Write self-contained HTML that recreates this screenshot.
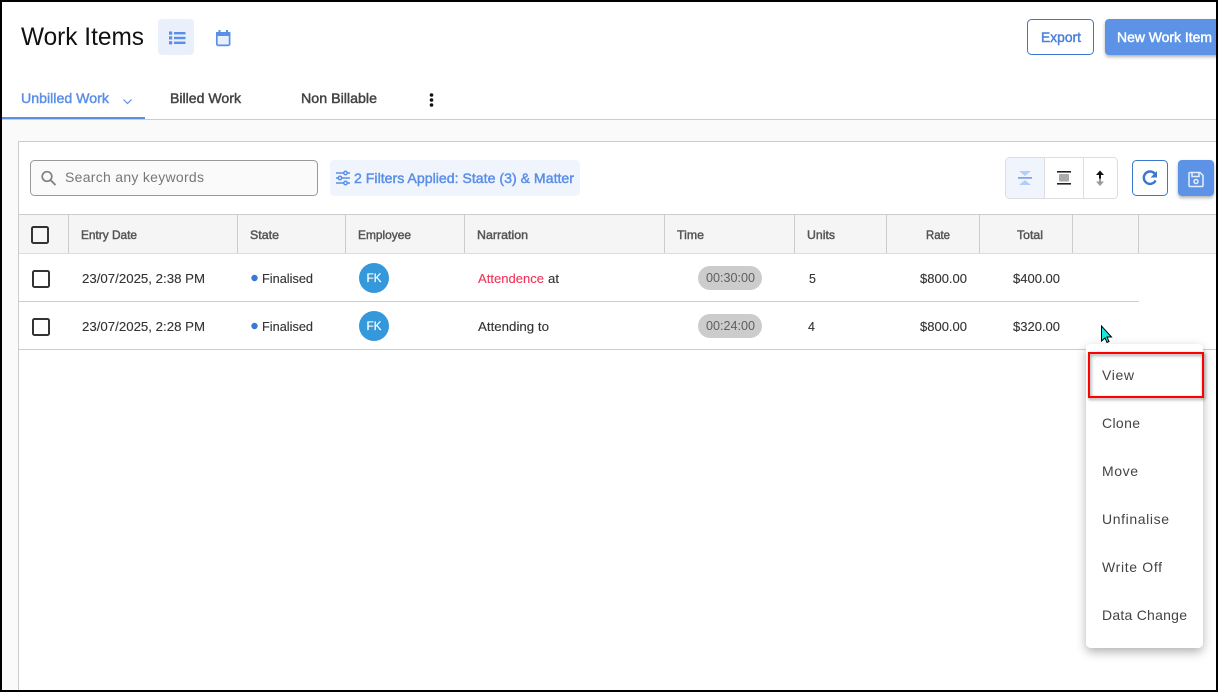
<!DOCTYPE html>
<html><head><meta charset="utf-8"><title>Work Items</title>
<style>
html,body{margin:0;padding:0;background:#fff;width:1218px;height:692px;overflow:hidden}
svg{display:block;position:absolute;left:0;top:0}
text{font-family:"Liberation Sans",sans-serif;font-size:12.5px;fill:#333}
.m{stroke-width:.45px}
.h{font-size:12px;fill:#555;stroke:#555;stroke-width:.45px}
.t{font-size:12.5px;fill:#333;stroke:#333;stroke-width:.12px}
.i{font-size:14px;fill:#444}
</style></head><body>
<svg width="1218" height="692" viewBox="0 0 1218 692" xmlns="http://www.w3.org/2000/svg">
<defs>
<filter id="s1" x="-30%" y="-10%" width="160%" height="125%"><feDropShadow dx="0" dy="4" stdDeviation="5" flood-color="#000" flood-opacity=".3"/></filter>
<filter id="s2" x="-20%" y="-20%" width="140%" height="150%"><feDropShadow dx="0" dy="2" stdDeviation="1.5" flood-color="#000" flood-opacity=".3"/></filter>
<filter id="s3" x="-10%" y="-10%" width="120%" height="130%"><feDropShadow dx="1" dy="1.500" stdDeviation="1.500" flood-color="#000" flood-opacity=".45"/></filter>
</defs>
<rect width="1218" height="692" fill="#fff"/>
<!-- page background -->
<rect x="2" y="120" width="1214" height="570" fill="#fafafa"/>
<rect x="2" y="119" width="1214" height="1" fill="#ccc"/>
<rect x="2" y="117" width="143" height="2" fill="#5b8fe6"/>
<!-- panel -->
<rect x="18.500" y="141.500" width="1210" height="560" fill="#fff" stroke="#ccc"/>

<!-- title -->
<text x="21" y="45" textLength="123" lengthAdjust="spacingAndGlyphs" style="font-size:25px;fill:#111">Work Items</text>
<rect x="158" y="19" width="36" height="36" rx="4" fill="#e9effb"/>
<g fill="#5b8fe6"><rect x="169" y="31.500" width="3.200" height="3.200"/><rect x="169" y="36.300" width="3.200" height="3.200"/><rect x="169" y="41.200" width="3.200" height="3.200"/><rect x="174" y="32" width="11.500" height="2.400"/><rect x="174" y="36.800" width="11.500" height="2.400"/><rect x="174" y="41.600" width="11.500" height="2.400"/></g>
<rect x="216.800" y="33" width="12.800" height="12.400" rx="1.500" fill="#e6effc" stroke="#5b8fe6" stroke-width="1.700"/>
<rect x="216" y="32" width="14.400" height="4" fill="#5b8fe6"/>
<rect x="218.500" y="30" width="2" height="3" fill="#5b8fe6"/><rect x="226" y="30" width="2" height="3" fill="#5b8fe6"/>

<!-- tabs -->
<text x="21" y="103" textLength="88" lengthAdjust="spacingAndGlyphs" class="m" style="font-size:14px;fill:#5b8fe6;stroke:#5b8fe6">Unbilled Work</text>
<path d="M123.500 99.500l4 4 4-4" fill="none" stroke="#5b8fe6" stroke-width="1.200"/>
<text x="170" y="103" textLength="71" lengthAdjust="spacingAndGlyphs" class="m" style="font-size:14px;fill:#444;stroke:#444">Billed Work</text>
<text x="301" y="103" textLength="76" lengthAdjust="spacingAndGlyphs" class="m" style="font-size:14px;fill:#444;stroke:#444">Non Billable</text>
<circle cx="431.500" cy="95" r="1.800" fill="#111"/><circle cx="431.500" cy="100" r="1.800" fill="#111"/><circle cx="431.500" cy="105" r="1.800" fill="#111"/>

<!-- top buttons -->
<rect x="1027.500" y="19.500" width="66" height="35" rx="4" fill="#fff" stroke="#3a78d0"/>
<text x="1041" y="42" textLength="40" lengthAdjust="spacingAndGlyphs" class="m" style="font-size:14px;fill:#4a80d8;stroke:#4a80d8">Export</text>
<rect x="1105" y="19" width="120" height="36" rx="4" fill="#5b93e6" filter="url(#s2)"/>
<text x="1117" y="42" textLength="95" lengthAdjust="spacingAndGlyphs" class="m" style="font-size:14px;fill:#fff;stroke:#fff">New Work Item</text>

<!-- search -->
<rect x="30.500" y="160.500" width="287" height="35" rx="4" fill="#fafafa" stroke="#999"/>
<circle cx="47" cy="176.500" r="4.800" fill="none" stroke="#808080" stroke-width="1.700"/>
<path d="M50.500 180l5 5" stroke="#808080" stroke-width="1.900" fill="none"/>
<text x="65" y="182" textLength="139" lengthAdjust="spacing" style="font-size:14px;fill:#777">Search any keywords</text>

<!-- filter chip -->
<rect x="330" y="160" width="250" height="36" rx="4" fill="#f0f5fd"/>
<g stroke="#5b8fe6" stroke-width="1.500" fill="#f0f5fd"><path d="M336 173h14M336 178h14M336 183h14"/><circle cx="345.500" cy="173" r="1.700"/><circle cx="340" cy="178" r="1.700"/><circle cx="345.500" cy="183" r="1.700"/></g>
<text x="354" y="183" textLength="220" lengthAdjust="spacingAndGlyphs" class="m" style="font-size:14px;fill:#5b8fe6;stroke:#5b8fe6">2 Filters Applied: State (3) &amp; Matter</text>

<!-- toggle group -->
<rect x="1005.500" y="157.500" width="112" height="41" rx="4" fill="#fff" stroke="#ddd"/>
<path d="M1006 161.500a3.500 3.500 0 0 1 3.500-3.500H1044v40h-34.500a3.500 3.500 0 0 1-3.500-3.500z" fill="#f0f5fd"/>
<rect x="1044" y="158" width="1" height="40" fill="#ddd"/><rect x="1083" y="158" width="1" height="40" fill="#ddd"/>
<rect x="1018" y="177" width="14" height="1.800" fill="#7fa8ea"/>
<path d="M1019 171h12l-6 5zM1019 185h12l-6-5z" fill="#b4cdf5"/>
<rect x="1057" y="171" width="14" height="1.600" fill="#222"/><rect x="1057" y="183" width="14" height="1.600" fill="#222"/><rect x="1059" y="174" width="10" height="7.500" rx="1" fill="#aaa"/>
<path d="M1100 170.500l-4 4.500h3v3.500h2V175h3z" fill="#111"/>
<path d="M1100 186l-4-4.500h3v-3h2v3h3z" fill="#999"/>

<rect x="1132.500" y="160.500" width="35" height="35" rx="4" fill="#fff" stroke="#3a78d0"/>
<path d="M1155 174a6.200 6.200 0 1 0 .6 6.400" fill="none" stroke="#3a78d0" stroke-width="2.400"/>
<path d="M1157 171v6.500h-6.500z" fill="#3a78d0"/>
<rect x="1178" y="160" width="36" height="36" rx="4" fill="#5b93e6" filter="url(#s2)"/>
<g fill="none" stroke="#e6eefc" stroke-width="1.500"><path d="M1190 172.500h10l3 3v10a1 1 0 0 1-1 1h-12a1 1 0 0 1-1-1v-12a1 1 0 0 1 1-1z"/><path d="M1192 173v3.500h7V173"/><circle cx="1196" cy="181.500" r="2"/></g>

<!-- table header -->
<rect x="19" y="215" width="1199" height="38" fill="#f5f5f5"/>
<rect x="19" y="214" width="1199" height="1" fill="#ccc"/>
<rect x="19" y="253" width="1199" height="1" fill="#ddd"/>
<g fill="#ccc"><rect x="68" y="215" width="1" height="38"/><rect x="237" y="215" width="1" height="38"/><rect x="345" y="215" width="1" height="38"/><rect x="464" y="215" width="1" height="38"/><rect x="664" y="215" width="1" height="38"/><rect x="794" y="215" width="1" height="38"/><rect x="886" y="215" width="1" height="38"/><rect x="979" y="215" width="1" height="38"/><rect x="1072" y="215" width="1" height="38"/><rect x="1138" y="215" width="1" height="38"/></g>
<rect x="32" y="227" width="16" height="16" rx="1.500" fill="none" stroke="#333" stroke-width="2"/>
<text class="h" x="81" y="239" textLength="56" lengthAdjust="spacingAndGlyphs">Entry Date</text>
<text class="h" x="250" y="239" textLength="29" lengthAdjust="spacingAndGlyphs">State</text>
<text class="h" x="358" y="239" textLength="53" lengthAdjust="spacingAndGlyphs">Employee</text>
<text class="h" x="477" y="239" textLength="51" lengthAdjust="spacingAndGlyphs">Narration</text>
<text class="h" x="677" y="239" textLength="27" lengthAdjust="spacingAndGlyphs">Time</text>
<text class="h" x="807" y="239" textLength="28" lengthAdjust="spacingAndGlyphs">Units</text>
<text class="h" x="926" y="239" textLength="24" lengthAdjust="spacingAndGlyphs">Rate</text>
<text class="h" x="1017" y="239" textLength="26" lengthAdjust="spacingAndGlyphs">Total</text>

<!-- row 1 -->
<rect x="33" y="271" width="16" height="16" rx="1.500" fill="none" stroke="#333" stroke-width="2"/>
<text class="t" x="82" y="283" textLength="123" lengthAdjust="spacingAndGlyphs">23/07/2025, 2:38 PM</text>
<circle cx="254.500" cy="278" r="3.200" fill="#3a78d8"/>
<text class="t" x="262" y="283" textLength="51" lengthAdjust="spacingAndGlyphs">Finalised</text>
<circle cx="374" cy="278" r="15" fill="#3498db"/>
<text x="366.500" y="282" textLength="15" lengthAdjust="spacingAndGlyphs" style="font-size:12px;fill:#fff;stroke:#fff;stroke-width:.2px">FK</text>
<text class="t" x="478" y="283" textLength="66" lengthAdjust="spacingAndGlyphs" style="fill:#f0355a;stroke:#f0355a">Attendence</text>
<text class="t" x="548" y="283" textLength="11" lengthAdjust="spacingAndGlyphs">at</text>
<rect x="698" y="266" width="64" height="24" rx="12" fill="#ccc"/>
<text x="706" y="282" textLength="49" lengthAdjust="spacingAndGlyphs" style="font-size:12.500px;fill:#5f5f5f">00:30:00</text>
<text class="t" x="809" y="283">5</text>
<text class="t" x="920" y="283" textLength="47" lengthAdjust="spacingAndGlyphs">$800.00</text>
<text class="t" x="1013" y="283" textLength="47" lengthAdjust="spacingAndGlyphs">$400.00</text>
<rect x="19" y="301" width="1120" height="1" fill="#ccc"/>

<!-- row 2 -->
<rect x="33" y="319" width="16" height="16" rx="1.500" fill="none" stroke="#333" stroke-width="2"/>
<text class="t" x="82" y="331" textLength="123" lengthAdjust="spacingAndGlyphs">23/07/2025, 2:28 PM</text>
<circle cx="254.500" cy="326" r="3.200" fill="#3a78d8"/>
<text class="t" x="262" y="331" textLength="51" lengthAdjust="spacingAndGlyphs">Finalised</text>
<circle cx="374" cy="326" r="15" fill="#3498db"/>
<text x="366.500" y="330" textLength="15" lengthAdjust="spacingAndGlyphs" style="font-size:12px;fill:#fff;stroke:#fff;stroke-width:.2px">FK</text>
<text class="t" x="478" y="331" textLength="71" lengthAdjust="spacingAndGlyphs">Attending to</text>
<rect x="698" y="314" width="64" height="24" rx="12" fill="#ccc"/>
<text x="706" y="330" textLength="49" lengthAdjust="spacingAndGlyphs" style="font-size:12.500px;fill:#5f5f5f">00:24:00</text>
<text class="t" x="808" y="331">4</text>
<text class="t" x="920" y="331" textLength="47" lengthAdjust="spacingAndGlyphs">$800.00</text>
<text class="t" x="1013" y="331" textLength="47" lengthAdjust="spacingAndGlyphs">$320.00</text>
<rect x="19" y="349" width="1199" height="1" fill="#ccc"/>

<!-- menu -->
<rect x="1086" y="344" width="117" height="304" rx="5" fill="#fff" filter="url(#s1)"/>
<text class="i" x="1102" y="380" textLength="32" lengthAdjust="spacing">View</text>
<text class="i" x="1102" y="428" textLength="38" lengthAdjust="spacing">Clone</text>
<text class="i" x="1102" y="476" textLength="36" lengthAdjust="spacing">Move</text>
<text class="i" x="1102" y="524" textLength="67" lengthAdjust="spacing">Unfinalise</text>
<text class="i" x="1102" y="572" textLength="60" lengthAdjust="spacing">Write Off</text>
<text class="i" x="1102" y="620" textLength="85" lengthAdjust="spacing">Data Change</text>
<rect x="1089" y="353" width="114" height="44" fill="none" stroke="#f00" stroke-width="2" filter="url(#s3)"/>

<!-- cursor -->
<path d="M1101.500 326v15l3.500-3 2 4.500 2-1-2-4.500h4.500z" fill="#19e6dc" stroke="#000" stroke-width="1"/>

<!-- screenshot border -->
<rect x="1" y="1" width="1216" height="690" fill="none" stroke="#000" stroke-width="2"/>
</svg>
</body></html>
